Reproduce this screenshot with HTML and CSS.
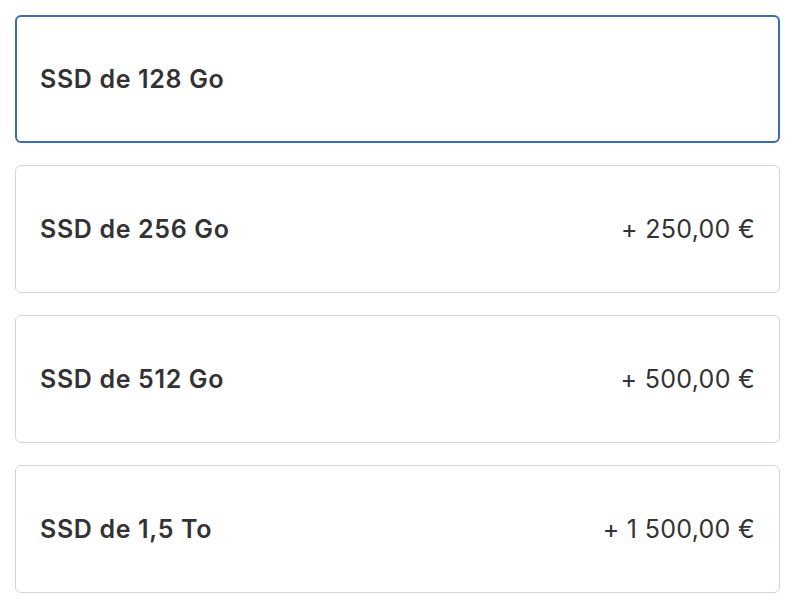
FILE: index.html
```html
<!DOCTYPE html>
<html lang="fr">
<head>
<meta charset="utf-8">
<link rel="stylesheet" href="styles.css">
</head>
<body>
<div class="list">
  <div class="option selected"><span class="name">SSD de 128 Go</span><span class="price"></span></div>
  <div class="option"><span class="name">SSD de 256 Go</span><span class="price">+ 250,00 €</span></div>
  <div class="option"><span class="name">SSD de 512 Go</span><span class="price">+ 500,00 €</span></div>
  <div class="option"><span class="name">SSD de 1,5 To</span><span class="price">+ 1 500,00 €</span></div>
</div>
</body>
</html>
```
FILE: styles.css
```css
html, body {
  margin: 0;
  padding: 0;
  background: #fff;
}
body {
  padding: 15px 0 0 15px;
  font-family: Inter, "Liberation Sans", sans-serif;
  color: #333336;
}
.list {
  width: 765px;
  display: flex;
  flex-direction: column;
  gap: 22px;
}
.option {
  box-sizing: border-box;
  height: 128px;
  border: 1px solid #d4d4d4;
  border-radius: 6px;
  display: flex;
  align-items: center;
  justify-content: space-between;
  padding: 0 24px 0 24px;
  font-size: 25px;
}
.option.selected {
  border: 2px solid #3a6db4;
  padding: 0 23px 0 23px;
}
.name {
  font-weight: 600;
  letter-spacing: 0.65px;
}
.price {
  font-weight: 400;
  letter-spacing: 0.3px;
}
```
